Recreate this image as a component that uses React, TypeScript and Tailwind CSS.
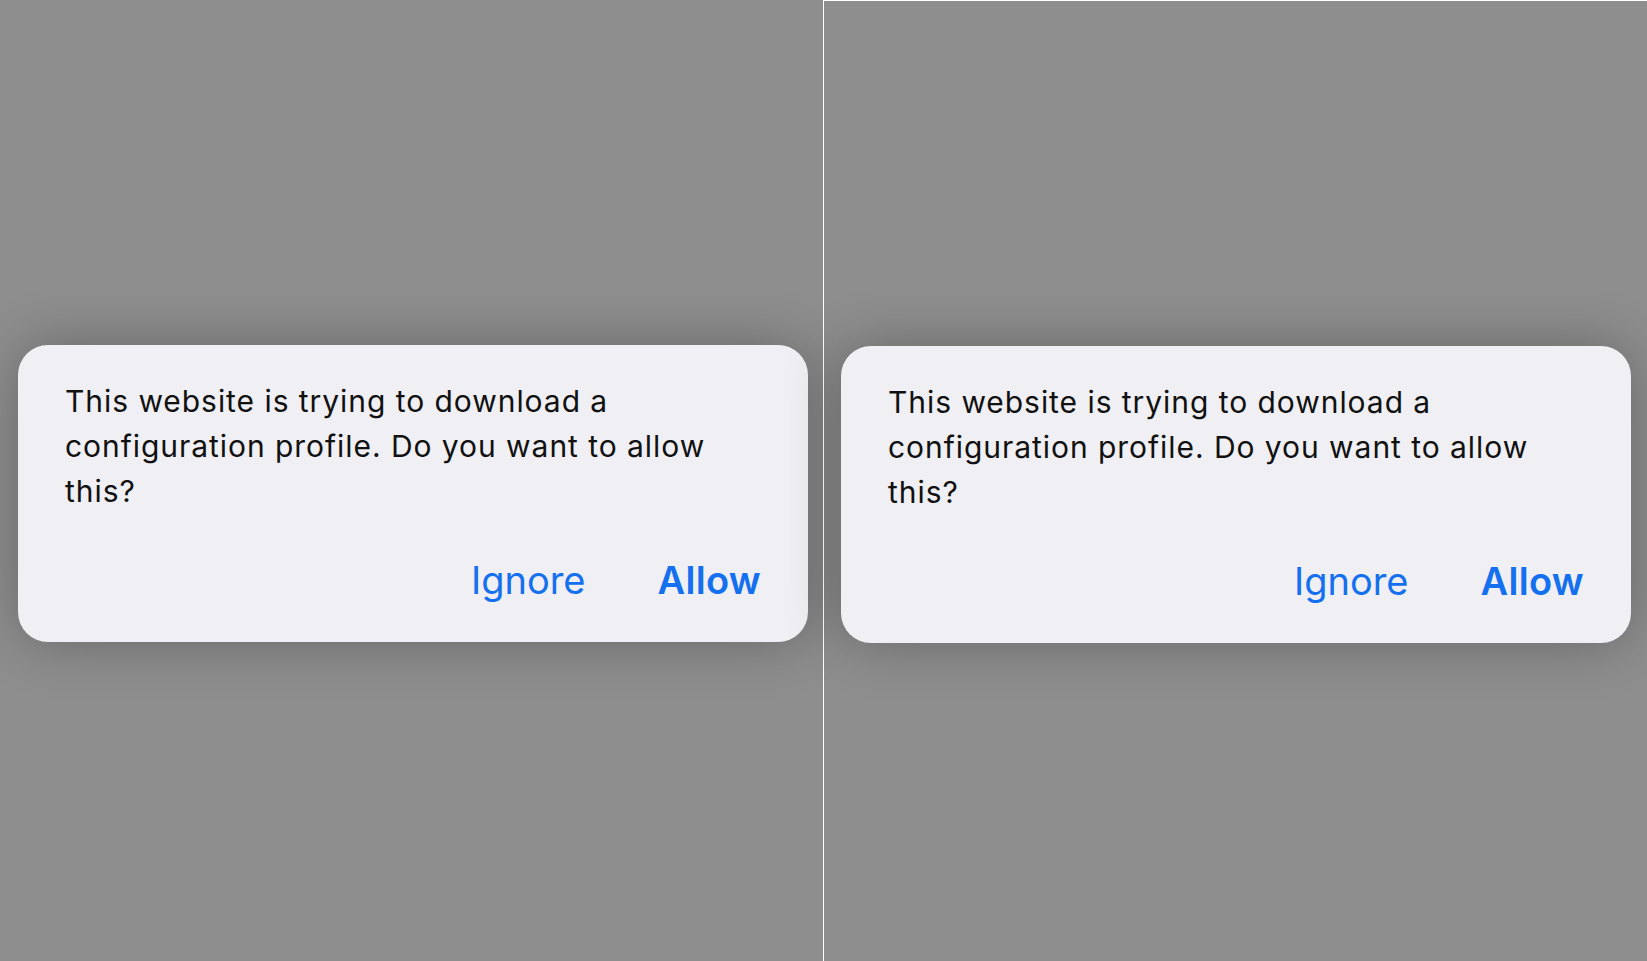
const Dialog = () => (
  <div className="flex h-[297px] w-[790px] flex-col rounded-[30px] bg-[#efeff4] pl-[47px] pr-[47px] pt-[34px] shadow-[0_0_55px_rgba(0,0,0,0.28)]">
    <p className="text-[30px] leading-[45px] tracking-[0.95px] text-[#111111]">
      This website is trying to download a configuration profile. Do you want to allow this?
    </p>
    <div className="mt-[47px] flex items-center justify-end gap-[72px]">
      <button className="text-[38px] leading-none text-[#1470ee]">Ignore</button>
      <button className="text-[38px] font-semibold leading-none tracking-[0.3px] text-[#1470ee]">Allow</button>
    </div>
  </div>
);

export default function App() {
  return (
    <div className="flex h-[961px] w-[1647px] bg-[#8e8e8e] font-['Inter',sans-serif]">
      <div className="w-[823px] pl-[18px] pt-[345px]">
        <Dialog />
      </div>
      <div className="w-px bg-white" />
      <div className="flex-1 border-t border-white pl-[17px] pt-[345px]">
        <Dialog />
      </div>
    </div>
  );
}
